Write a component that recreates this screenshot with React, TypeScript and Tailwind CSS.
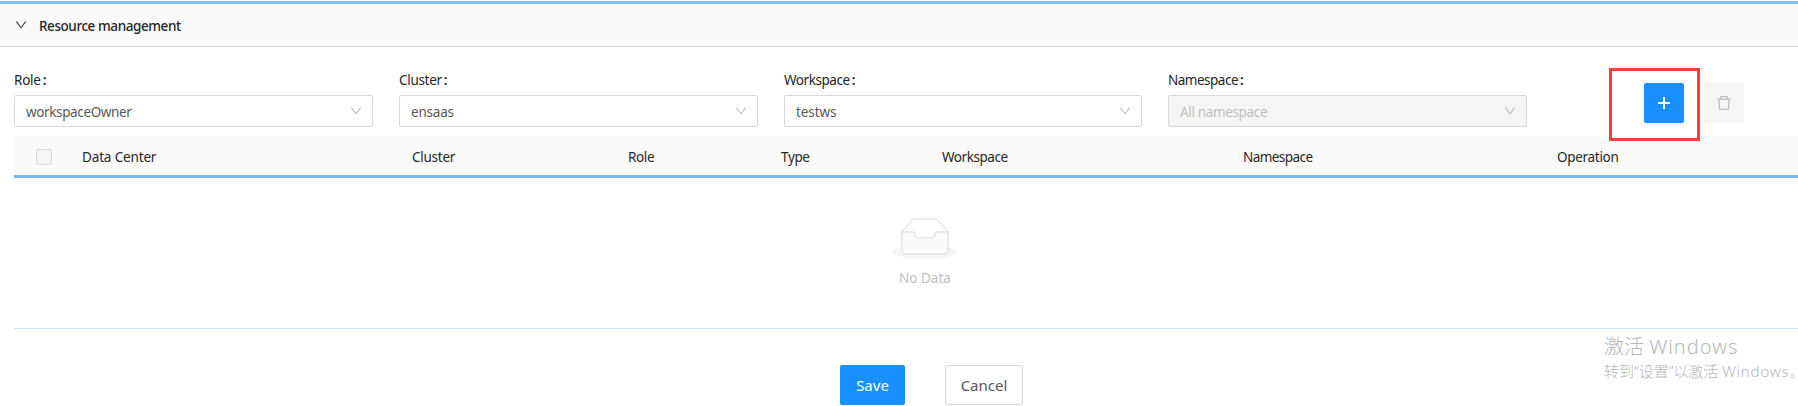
import { AiOutlineDelete, AiOutlineDown } from "react-icons/ai";

type Field = { label: string; value: string; labelSpacing: string; valueSpacing: string; width: string; disabled?: boolean };

const fields: Field[] = [
  { label: "Role", value: "workspaceOwner", labelSpacing: "tracking-[-0.25px]", valueSpacing: "tracking-[-0.37px]", width: "w-[359px]" },
  { label: "Cluster", value: "ensaas", labelSpacing: "tracking-[-0.3px]", valueSpacing: "tracking-[-0.2px]", width: "w-[359px]" },
  { label: "Workspace", value: "testws", labelSpacing: "tracking-[-0.45px]", valueSpacing: "tracking-[-0.1px]", width: "w-[358px]" },
  { label: "Namespace", value: "All namespace", labelSpacing: "tracking-[-0.5px]", valueSpacing: "tracking-[-0.35px]", width: "w-[359px]", disabled: true },
];

const columns = [
  { title: "Data Center", width: "w-[330px]", spacing: "tracking-[-0.15px]" },
  { title: "Cluster", width: "w-[216px]", spacing: "tracking-[-0.25px]" },
  { title: "Role", width: "w-[153px]", spacing: "tracking-[-0.35px]" },
  { title: "Type", width: "w-[161px]", spacing: "tracking-[-0.35px]" },
  { title: "Workspace", width: "w-[301px]", spacing: "tracking-[-0.45px]" },
  { title: "Namespace", width: "w-[314px]", spacing: "tracking-[-0.55px]" },
  { title: "Operation", width: "w-[241px]", spacing: "tracking-[-0.3px]" },
];

function SelectField({ field }: { field: Field }) {
  return (
    <div className={`${field.width} shrink-0`}>
      <div className={`flex h-8 items-center pt-[2px] text-[13.5px] text-[#262626] ${field.labelSpacing}`}>
        {field.label}
        <span className="ml-[2px] font-semibold">:</span>
      </div>
      <div
        className={`flex h-8 items-center justify-between rounded-[2px] border border-[#d9d9d9] pr-[9px] pl-[11px] text-[13.5px] ${field.valueSpacing} ${
          field.disabled ? "bg-[#f5f5f5] text-[#bfbfbf]" : "bg-white text-[#595959]"
        }`}
      >
        <span className="pt-[2px]">{field.value}</span>
        <AiOutlineDown className="size-[14px] text-[#bfbfbf]" />
      </div>
    </div>
  );
}

function EmptyTray() {
  return (
    <svg width="64" height="41" viewBox="0 0 64 41">
      <g transform="translate(0 1)" fill="none" fillRule="evenodd">
        <ellipse fill="#F5F5F5" cx="32" cy="33" rx="32" ry="7" />
        <g fillRule="nonzero" stroke="#D9D9D9">
          <path d="M55 12.76L44.854 1.258C44.367.474 43.656 0 42.907 0H21.093c-.749 0-1.46.474-1.947 1.257L9 12.761V22h46v-9.24z" />
          <path
            d="M41.613 15.931c0-1.605.994-2.93 2.227-2.931H55v18.137C55 33.26 53.68 35 52.05 35h-40.1C10.32 35 9 33.259 9 31.137V13h11.16c1.233 0 2.227 1.323 2.227 2.928v.022c0 1.605 1.005 2.901 2.237 2.901h14.752c1.232 0 2.237-1.308 2.237-2.913v-.007z"
            fill="#FAFAFA"
          />
        </g>
      </g>
    </svg>
  );
}

export default function App() {
  return (
    <div className="relative h-[406px] w-[1798px] overflow-hidden bg-white pt-px font-['Noto_Sans','Noto_Sans_CJK_SC',sans-serif]">
      <header className="flex h-[46px] items-center border-t-[3px] border-b border-t-[#7cbdfc] border-b-[#d9d9d9] bg-[#fafafa] pl-[14px]">
        <AiOutlineDown className="size-[14px] text-[#404040]" />
        <h1 className="ml-[11px] pt-[2px] text-[13.5px] font-medium tracking-[-0.43px] text-[#262626]">Resource management</h1>
      </header>

      <section className="flex h-[90px] pt-4 pl-[14px]">
        <div className="flex gap-[26px]">
          {fields.map((field) => (
            <SelectField key={field.label} field={field} />
          ))}
        </div>
        <div className="ml-[117px] flex gap-5 pt-5">
          <div className="relative size-10">
            <button
              aria-label="Add"
              className="flex size-10 items-center justify-center rounded-[2px] bg-[#1890ff] text-white shadow-[0_2px_0_rgba(0,0,0,0.04)]"
            >
              <svg width="16" height="16" viewBox="0 0 16 16" fill="none" stroke="currentColor" strokeWidth="2">
                <path d="M8 2v12M2 8h12" />
              </svg>
            </button>
            <div className="pointer-events-none absolute -top-[15px] -left-[35px] h-[73px] w-[91px] border-[3px] border-[#ff3a3a]" />
          </div>
          <button aria-label="Delete" disabled className="flex size-10 items-center justify-center rounded-[2px] bg-[#f5f5f5] text-[#bfbfbf]">
            <AiOutlineDelete className="size-[18px]" />
          </button>
        </div>
      </section>

      <section className="ml-[14px]">
        <div className="flex h-[41px] items-center border-b-[3px] border-[#7ab8ee] bg-[#fafafa] pl-[22px]">
          <span className="mt-[2px] mr-[30px] size-4 shrink-0 rounded-[2px] border border-[#d9d9d9] bg-[#f5f5f5]" />
          {columns.map((column) => (
            <span key={column.title} className={`${column.width} ${column.spacing} shrink-0 pt-[3px] text-[13.5px] text-[#262626]`}>
              {column.title}
            </span>
          ))}
        </div>
        <div className="flex h-[151px] flex-col items-center border-b border-[#d3e7f8] pt-[40px] pl-[38px]">
          <EmptyTray />
          <p className="mt-[9px] text-[13.5px] text-[#bfbfbf]">No Data</p>
        </div>
      </section>

      <footer className="mt-9 ml-[840px] flex gap-10">
        <button className="h-10 w-[65px] rounded-[2px] bg-[#1890ff] text-[15px] text-white">Save</button>
        <button className="h-10 w-[78px] rounded-[2px] border border-[#d9d9d9] bg-white text-[15px] text-[#595959]">Cancel</button>
      </footer>

      <aside className="absolute top-[332px] left-[1604px] whitespace-nowrap text-[#b8b8b8]">
        <p className="text-[20px] leading-[29px] font-light">
          激活 <span className="tracking-[1px]">Windows</span>
        </p>
        <p className="text-[15px] leading-[20px] font-light">
          转到“设置”以激活 <span className="tracking-[0.8px]">Windows</span>。
        </p>
      </aside>
    </div>
  );
}
